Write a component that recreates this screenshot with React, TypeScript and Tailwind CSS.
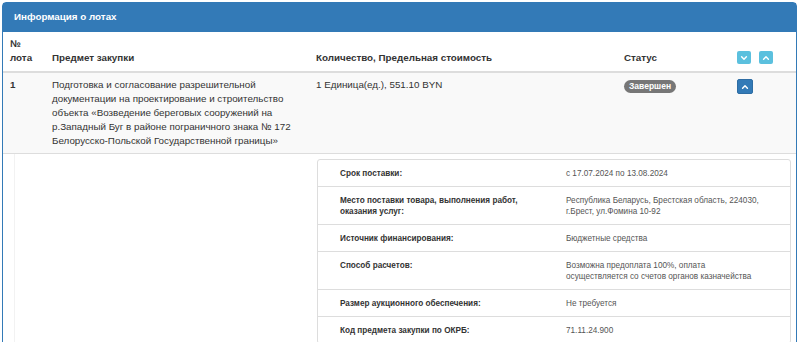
import React from "react";

const ChevronUp = ({ size = 8 }: { size?: number }) => (
  <svg width={size} height={size} viewBox="0 0 10 10" fill="none">
    <polyline points="2,6.5 5,3.5 8,6.5" stroke="white" strokeWidth="1.8" strokeLinecap="round" strokeLinejoin="round" />
  </svg>
);
const ChevronDown = ({ size = 8 }: { size?: number }) => (
  <svg width={size} height={size} viewBox="0 0 10 10" fill="none">
    <polyline points="2,3.5 5,6.5 8,3.5" stroke="white" strokeWidth="1.8" strokeLinecap="round" strokeLinejoin="round" />
  </svg>
);

const details: [string, string][] = [
  ["Срок поставки:", "с 17.07.2024 по 13.08.2024"],
  ["Место поставки товара, выполнения работ, оказания услуг:", "Республика Беларусь, Брестская область, 224030, г.Брест, ул.Фомина 10-92"],
  ["Источник финансирования:", "Бюджетные средства"],
  ["Способ расчетов:", "Возможна предоплата 100%, оплата осуществляется со счетов органов казначейства"],
  ["Размер аукционного обеспечения:", "Не требуется"],
  ["Код предмета закупки по ОКРБ:", "71.11.24.900"],
];

export default function App() {
  return (
    <div className="w-[800px] h-[342px] overflow-hidden bg-white font-['Liberation_Sans',Arial,sans-serif] text-[#333]">
      <div className="ml-[2px] mt-[2px] w-[795px] border border-[#337ab7] rounded-t-[4px]">
        <div className="bg-[#337ab7] h-[29px] pl-[11px] flex items-center text-white font-bold text-[9.8px]">
          Информация о лотах
        </div>
        {/* header row */}
        <div className="grid grid-cols-[42px_264px_308px_113px_1fr] border-b-2 border-[#ddd] text-[9.8px] leading-[14px] font-bold">
          <div className="px-[7px] pt-[5px] pb-[6px] flex items-end">№<br />лота</div>
          <div className="px-[7px] pt-[5px] pb-[6px] flex items-end">Предмет закупки</div>
          <div className="px-[7px] pt-[5px] pb-[6px] flex items-end">Количество, Предельная стоимость</div>
          <div className="px-[7px] pt-[5px] pb-[6px] flex items-end">Статус</div>
          <div className="px-[7px] pt-[5px] pb-[7px] flex items-end gap-[8px]">
            <div className="w-[14px] h-[13px] bg-[#5bc0de] rounded-[2px] flex items-center justify-center">
              <ChevronDown />
            </div>
            <div className="w-[14px] h-[13px] bg-[#5bc0de] rounded-[2px] flex items-center justify-center">
              <ChevronUp />
            </div>
          </div>
        </div>
        {/* body row */}
        <div className="grid grid-cols-[42px_264px_308px_113px_1fr] bg-[#f9f9f9] border-b border-[#ddd] text-[9.8px] leading-[14px]">
          <div className="px-[7px] py-[5px] font-bold">1</div>
          <div className="px-[7px] py-[5px]">
            Подготовка и согласование разрешительной документации на проектирование и строительство объекта «Возведение береговых сооружений на р.Западный Буг в районе пограничного знака № 172 Белорусско-Польской Государственной границы»
          </div>
          <div className="px-[7px] py-[5px]">1 Единица(ед.), 551.10 BYN</div>
          <div className="px-[7px] py-[6px]">
            <span className="inline-flex items-center h-[13px] px-[5px] rounded-[10px] bg-[#777] text-white font-bold text-[8.5px] leading-none">
              Завершен
            </span>
          </div>
          <div className="px-[7px] py-[6px]">
            <div className="w-[16px] h-[15px] bg-[#337ab7] rounded-[2px] flex items-center justify-center border border-[#2e6da4]">
              <ChevronUp />
            </div>
          </div>
        </div>
        {/* detail row */}
        <div className="grid grid-cols-[306px_1fr]">
          <div className="pl-[11px]">
            <div className="h-full border-l border-[#f2f2f2]" />
          </div>
          <div className="pl-[8px] pr-[5px] pt-[5px] pb-[6px]">
            <div className="border border-[#ddd] rounded-[3px] text-[8.2px] leading-[11px]">
              {details.map(([k, v], i) => (
                <div
                  key={i}
                  className={`grid grid-cols-[240px_1fr] ${i > 0 ? "border-t border-[#ddd]" : ""}`}
                >
                  <div className="pl-[22px] pr-[8px] py-[7.5px] font-bold text-[#333]">{k}</div>
                  <div className="pl-[8px] pr-[27px] py-[7.5px] text-[#555]">{v}</div>
                </div>
              ))}
            </div>
          </div>
        </div>
      </div>
    </div>
  );
}
